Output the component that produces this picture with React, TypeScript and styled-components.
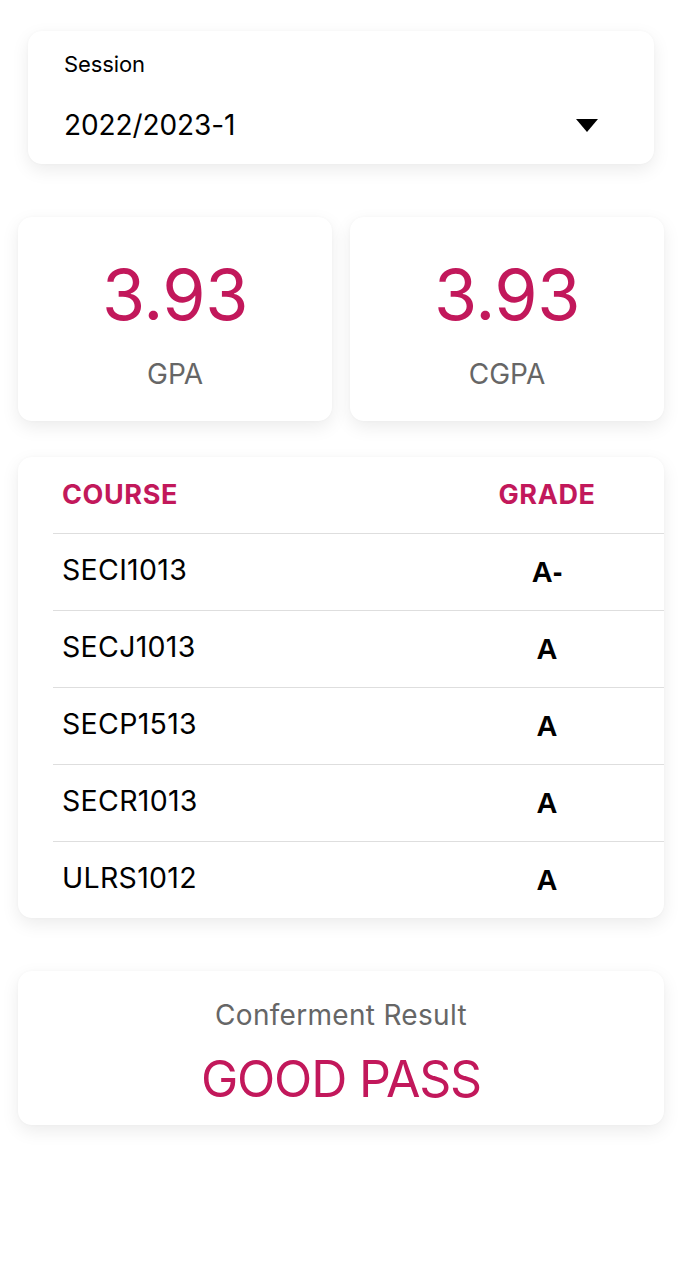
import React from "react";
import styled, { createGlobalStyle } from "styled-components";

const Global = createGlobalStyle`
  html, body { margin: 0; padding: 0; background: #ffffff; }
  body { font-family: Inter, "Noto Sans", Roboto, sans-serif; color: #000; }
  * { box-sizing: border-box; }
`;

const PINK = "#c2185b";

const Page = styled.div`
  display: flex;
  flex-direction: column;
  padding: 31px 18px 40px;
`;

const Card = styled.div`
  background: #fff;
  border-radius: 14px;
  box-shadow: 0 6px 18px rgba(0, 0, 0, 0.08), 0 0 3px rgba(0, 0, 0, 0.03);
`;

const SessionCard = styled(Card)`
  margin: 0 10px;
  height: 133px;
  padding: 20px 56px 0 36px;
  display: flex;
  flex-direction: column;
`;

const SessionLabel = styled.div`
  font-size: 22px;
  line-height: 26px;
  letter-spacing: -0.1px;
`;

const SessionRow = styled.div`
  margin-top: 31px;
  display: flex;
  align-items: center;
  justify-content: space-between;
`;

const SessionValue = styled.div`
  font-size: 28px;
  line-height: 34px;
  letter-spacing: -0.1px;
`;

const Caret = styled.svg`
  width: 22px;
  height: 13px;
`;

const Stats = styled.div`
  margin-top: 53px;
  display: grid;
  grid-template-columns: 1fr 1fr;
  gap: 18px;
`;

const StatCard = styled(Card)`
  height: 204px;
  display: flex;
  flex-direction: column;
  align-items: center;
  padding-top: 36px;
`;

const StatValue = styled.div`
  color: ${PINK};
  font-size: 70px;
  line-height: 84px;
  letter-spacing: -0.5px;
`;

const StatLabel = styled.div`
  margin-top: 20px;
  color: #666;
  font-size: 28px;
  line-height: 34px;
`;

const TableCard = styled(Card)`
  margin-top: 36px;
  padding-left: 35px;
  overflow: hidden;
`;

const Row = styled.div<{ $header?: boolean }>`
  display: grid;
  grid-template-columns: 1fr 234px;
  align-items: center;
  height: ${(p) => (p.$header ? "76px" : "77px")};
  border-top: ${(p) => (p.$header ? "none" : "1px solid #dedede")};
  padding-left: 9px;
`;

const HeadCell = styled.div<{ $center?: boolean }>`
  color: ${PINK};
  font-weight: 700;
  font-size: 27px;
  letter-spacing: 0.6px;
  text-align: ${(p) => (p.$center ? "center" : "left")};
  padding-bottom: 2px;
`;

const CourseCell = styled.div`
  font-size: 28.5px;
  letter-spacing: 0.3px;
  padding-bottom: 6px;
`;

const GradeCell = styled.div`
  font-family: "Liberation Sans", Arial, sans-serif;
  font-weight: 700;
  font-size: 29px;
  text-align: center;
`;

const ResultCard = styled(Card)`
  margin-top: 53px;
  height: 154px;
  display: flex;
  flex-direction: column;
  align-items: center;
  padding-top: 26px;
`;

const ResultLabel = styled.div`
  color: #666;
  font-size: 28px;
  line-height: 36px;
  letter-spacing: 0.3px;
`;

const ResultValue = styled.div`
  margin-top: 16px;
  color: ${PINK};
  font-size: 50px;
  line-height: 60px;
  letter-spacing: -1.2px;
`;

const rows = [
  ["SECI1013", "A-"],
  ["SECJ1013", "A"],
  ["SECP1513", "A"],
  ["SECR1013", "A"],
  ["ULRS1012", "A"],
];

export default function App() {
  return (
    <>
      <Global />
      <Page>
        <SessionCard>
          <SessionLabel>Session</SessionLabel>
          <SessionRow>
            <SessionValue>2022/2023-1</SessionValue>
            <Caret viewBox="0 0 22 13">
              <path d="M0 0 H22 L11 13 Z" fill="#000" />
            </Caret>
          </SessionRow>
        </SessionCard>
        <Stats>
          <StatCard>
            <StatValue>3.93</StatValue>
            <StatLabel>GPA</StatLabel>
          </StatCard>
          <StatCard>
            <StatValue>3.93</StatValue>
            <StatLabel>CGPA</StatLabel>
          </StatCard>
        </Stats>
        <TableCard>
          <Row $header>
            <HeadCell>COURSE</HeadCell>
            <HeadCell $center>GRADE</HeadCell>
          </Row>
          {rows.map(([c, g]) => (
            <Row key={c}>
              <CourseCell>{c}</CourseCell>
              <GradeCell>{g}</GradeCell>
            </Row>
          ))}
        </TableCard>
        <ResultCard>
          <ResultLabel>Conferment Result</ResultLabel>
          <ResultValue>GOOD PASS</ResultValue>
        </ResultCard>
      </Page>
    </>
  );
}
